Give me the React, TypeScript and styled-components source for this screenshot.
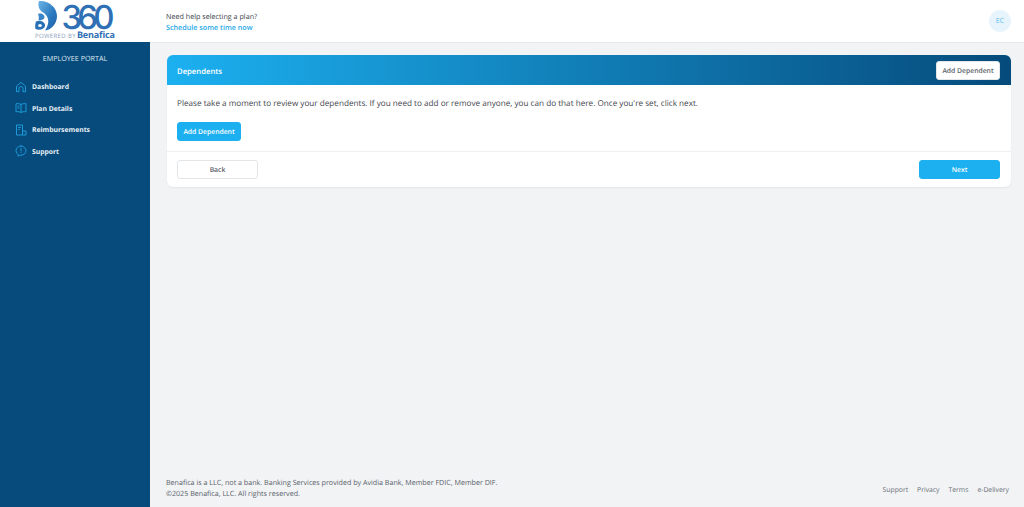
import React from 'react'
import styled, { createGlobalStyle } from 'styled-components'

const GlobalStyle = createGlobalStyle`
  html, body { margin: 0; padding: 0; height: 100%; }
  body {
    font-family: "Open Sans", "Noto Sans", sans-serif;
    background: #f2f3f5;
    overflow: hidden;
    text-rendering: geometricPrecision;
  }
  #root { height: 100%; }
`

const Shell = styled.div`
  display: grid;
  grid-template-columns: 150px 1fr;
  height: 507px;
  width: 1024px;
`

const Side = styled.aside`
  display: flex;
  flex-direction: column;
  background: #064b7c;
`

const LogoBox = styled.div`
  height: 42px;
  background: #fff;
  display: flex;
  justify-content: center;
  align-items: flex-start;
`

const PortalTitle = styled.div`
  color: #dfe8ef;
  font-size: 7.2px;
  line-height: 11px;
  text-align: center;
  margin-top: 11px;
  padding-top: 0.5px;
`

const Nav = styled.nav`
  display: flex;
  flex-direction: column;
  margin-top: 11.7px;
  padding-left: 15px;
`

const NavItem = styled.a`
  display: flex;
  align-items: center;
  height: 21.5px;
  gap: 5px;
  color: #e8f0f6;
  font-size: 6.8px;
  font-weight: 700;
  svg { width: 12px; height: 12px; color: #1fa3e3; flex: none; }
`

const Main = styled.div`
  display: flex;
  flex-direction: column;
  min-width: 0;
`

const Header = styled.header`
  height: 43px;
  box-sizing: border-box;
  background: #fff;
  border-bottom: 1px solid #e6e8eb;
  display: flex;
  align-items: center;
  justify-content: space-between;
  padding: 0 13px 0 16px;
`

const HelpText = styled.div`
  font-size: 7.2px;
  line-height: 11px;
  color: #3a4149;
  padding-top: 3px;
`

const HelpLink = styled.a`
  display: block;
  color: #1fa9e6;
  font-weight: 600;
`

const Avatar = styled.div`
  width: 22px;
  height: 22px;
  border-radius: 50%;
  background: #e8f4fb;
  color: #5cbdec;
  font-size: 7.2px;
  display: flex;
  align-items: center;
  justify-content: center;
`

const Content = styled.main`
  flex: 1;
  padding: 12px 13px 0 17px;
`

const Card = styled.section`
  background: #fff;
  border-radius: 6px;
  overflow: hidden;
  box-shadow: 0 1px 2px rgba(0, 0, 0, 0.06);
`

const CardHead = styled.div`
  height: 30px;
  background: linear-gradient(90deg, #1cb0f0 0%, #064b7c 100%);
  display: flex;
  align-items: center;
  justify-content: space-between;
  padding: 0 11px 0 10px;
  color: #fff;
`

const CardTitle = styled.h2`
  margin: 3px 0 0;
  font-size: 7.7px;
  font-weight: 600;
`

const CardBody = styled.div`
  padding: 13px 10px 10px;
  border-bottom: 1px solid #eef0f2;
`

const Para = styled.p`
  margin: 0 0 12px;
  font-size: 8.16px;
  line-height: 12px;
  color: #3f464e;
`

const CardFoot = styled.div`
  display: flex;
  justify-content: space-between;
  padding: 8px 11px 8px 10px;
`

const Button = styled.button<{ $kind: 'primary' | 'light'; $width?: number }>`
  display: block;
  font-family: inherit;
  font-size: 6.8px;
  font-weight: 600;
  height: 19px;
  border-radius: 3px;
  padding: 0;
  cursor: pointer;
  text-rendering: geometricPrecision;
  width: ${p => p.$width ?? 64}px;
  border: 1px solid ${p => (p.$kind === 'primary' ? '#1cb0f0' : '#e3e6e9')};
  background: ${p => (p.$kind === 'primary' ? '#1cb0f0' : '#fff')};
  color: ${p => (p.$kind === 'primary' ? '#fff' : '#5a6068')};
`

const Footer = styled.footer`
  display: flex;
  justify-content: space-between;
  align-items: center;
  padding: 0 15px 7px 16px;
  font-size: 7.15px;
  line-height: 11px;
  color: #59616a;
`

const FooterLinks = styled.div`
  display: flex;
  gap: 9px;
  color: #6a7178;
  font-size: 6.8px;
`

const BrandNumber = styled.text`
  font-family: "Inter", "Open Sans", sans-serif;
  font-size: 33px;
  font-weight: 500;
  fill: #2f6fb4;
`

const BrandSmall = styled.text`
  font-family: "Open Sans", sans-serif;
  font-size: 6px;
  fill: #8aa0b8;
`

const BrandName = styled.text`
  font-family: "Open Sans", sans-serif;
  font-size: 9px;
  font-weight: 700;
  fill: #2f6fb4;
`

const Logo = () => (
  <svg width="84" height="41" viewBox="0 0 84 41">
    <defs>
      <linearGradient id="lg" x1="0" y1="0" x2="1" y2="1">
        <stop offset="0" stopColor="#6ab4e4" />
        <stop offset="0.6" stopColor="#2a78bf" />
        <stop offset="1" stopColor="#1c5fa8" />
      </linearGradient>
    </defs>
    {/* crescent */}
    <path d="M6 1C15 0 24 7 24 16C24 24 18 30 12 30.500C15 26 16.500 21 14 16.500C12 12.500 7.500 12 6 8C5.500 5.500 5 3 6 1Z" fill="url(#lg)" />
    {/* bowls of the B */}
    <path d="M5 14C8 12.500 12 14.500 11.500 17.500C11 20 8 20.500 5.500 20C6 18 6 16 5 14Z" fill="#3a86c8" />
    <path d="M3 21.500C7 19.500 12.500 22 12 26C11.500 29.500 6 30.500 2.500 29C2 26.500 2 24 3 21.500Z" fill="#2a70b5" />
    <ellipse cx="7" cy="25.500" rx="1.800" ry="1.500" fill="#fff" />
    <BrandNumber x="28.500" y="28.500" textLength="53">360</BrandNumber>
    <BrandSmall x="2" y="37.500" textLength="40.500">POWERED BY</BrandSmall>
    <BrandName x="44" y="38" textLength="38">Benafica</BrandName>
  </svg>
)

const HomeIcon = () => (
  <svg viewBox="0 0 12 12" fill="none" stroke="currentColor" strokeWidth="0.9" strokeLinejoin="round">
    <path d="M1.500 5.200 6 1.300l4.500 3.900v5.500H8V7.500a2 2 0 0 0-4 0v3.200H1.500z" />
  </svg>
)

const BookIcon = () => (
  <svg viewBox="0 0 12 12" fill="none" stroke="currentColor" strokeWidth="0.9" strokeLinejoin="round">
    <path d="M6 2.500C5 1.800 3 1.500 1 1.700v8c2-.2 4 .1 5 .8 1-.7 3-1 5-.8v-8c-2-.2-4 .1-5 .8zM6 2.500v8" />
    <path d="M2.600 4.200h1.800M2.600 6h1.800" />
  </svg>
)

const ReimburseIcon = () => (
  <svg viewBox="0 0 12 12" fill="none" stroke="currentColor" strokeWidth="0.9" strokeLinejoin="round">
    <path d="M7.500 7V1H1.500v10h6" />
    <path d="M7.500 7H11v4H7.500z" />
    <path d="M3.200 3.500h2.600M3.200 5.500h1.600" />
  </svg>
)

const SupportIcon = () => (
  <svg viewBox="0 0 12 12" fill="none" stroke="currentColor" strokeWidth="0.9" strokeLinejoin="round" strokeLinecap="round">
    <path d="M6 1a5 4.600 0 0 1 5 4.600 5 4.600 0 0 1-5 4.600H4.800L3.200 11.300V9.500A4.600 4.600 0 0 1 1 5.600 5 4.600 0 0 1 6 1z" />
    <path d="M6 3.300v2.700M6 7.600v.1" />
  </svg>
)

const navItems = [
  { label: 'Dashboard', icon: <HomeIcon /> },
  { label: 'Plan Details', icon: <BookIcon /> },
  { label: 'Reimbursements', icon: <ReimburseIcon /> },
  { label: 'Support', icon: <SupportIcon /> },
]

export default function App() {
  return (
    <Shell>
      <GlobalStyle />
      <Side>
        <LogoBox>
          <Logo />
        </LogoBox>
        <PortalTitle>EMPLOYEE PORTAL</PortalTitle>
        <Nav>
          {navItems.map(n => (
            <NavItem key={n.label}>
              {n.icon}
              {n.label}
            </NavItem>
          ))}
        </Nav>
      </Side>
      <Main>
        <Header>
          <HelpText>
            Need help selecting a plan?
            <HelpLink>Schedule some time now</HelpLink>
          </HelpText>
          <Avatar>EC</Avatar>
        </Header>
        <Content>
          <Card>
            <CardHead>
              <CardTitle>Dependents</CardTitle>
              <Button $kind="light">Add Dependent</Button>
            </CardHead>
            <CardBody>
              <Para>
                Please take a moment to review your dependents. If you need to add or remove anyone, you can do that
                here. Once you're set, click next.
              </Para>
              <Button $kind="primary">Add Dependent</Button>
            </CardBody>
            <CardFoot>
              <Button $kind="light" $width={81}>Back</Button>
              <Button $kind="primary" $width={81}>Next</Button>
            </CardFoot>
          </Card>
        </Content>
        <Footer>
          <div>
            Benafica is a LLC, not a bank. Banking Services provided by Avidia Bank, Member FDIC, Member DIF.
            <br />
            ©2025 Benafica, LLC. All rights reserved.
          </div>
          <FooterLinks>
            <span>Support</span>
            <span>Privacy</span>
            <span>Terms</span>
            <span>e-Delivery</span>
          </FooterLinks>
        </Footer>
      </Main>
    </Shell>
  )
}
